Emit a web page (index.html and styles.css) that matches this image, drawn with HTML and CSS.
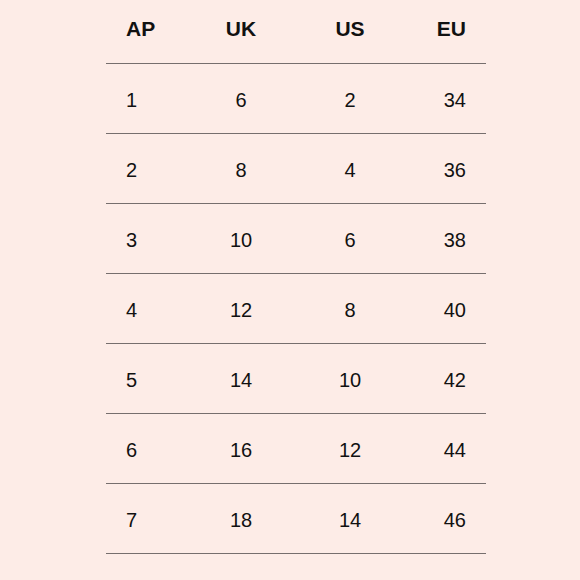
FILE: index.html
```html
<!DOCTYPE html>
<html>
<head>
<meta charset="utf-8">
<link rel="stylesheet" href="styles.css">
</head>
<body>
<div class="size-table">
  <div class="row head">
    <div class="c c1">AP</div><div class="c c2">UK</div><div class="c c3">US</div><div class="c c4">EU</div>
  </div>
  <div class="row"><div class="c c1">1</div><div class="c c2">6</div><div class="c c3">2</div><div class="c c4">34</div></div>
  <div class="row"><div class="c c1">2</div><div class="c c2">8</div><div class="c c3">4</div><div class="c c4">36</div></div>
  <div class="row"><div class="c c1">3</div><div class="c c2">10</div><div class="c c3">6</div><div class="c c4">38</div></div>
  <div class="row"><div class="c c1">4</div><div class="c c2">12</div><div class="c c3">8</div><div class="c c4">40</div></div>
  <div class="row"><div class="c c1">5</div><div class="c c2">14</div><div class="c c3">10</div><div class="c c4">42</div></div>
  <div class="row"><div class="c c1">6</div><div class="c c2">16</div><div class="c c3">12</div><div class="c c4">44</div></div>
  <div class="row"><div class="c c1">7</div><div class="c c2">18</div><div class="c c3">14</div><div class="c c4">46</div></div>
</div>
</body>
</html>
```
FILE: styles.css
```css
html, body {
  margin: 0;
  padding: 0;
  background: #fdece7;
  font-family: "Liberation Sans", Arial, sans-serif;
  color: #111;
}
.size-table {
  width: 380px;
  margin-left: 106px;
}
.row {
  display: grid;
  grid-template-columns: 80px 110px 108px 82px;
  align-items: center;
  height: 69px;
  border-bottom: 1px solid #766e6d;
  font-size: 20px;
}
.row.head {
  height: 63px;
  font-size: 21px;
  font-weight: bold;
  align-items: start;
}
.row.head .c {
  padding-top: 17px;
}
.c { line-height: 24px; }
.c1 { padding-left: 20px; }
.c2, .c3 { text-align: center; }
.c4 { text-align: right; padding-right: 20px; }
.row:not(.head) .c { padding-top: 2px; }
```
